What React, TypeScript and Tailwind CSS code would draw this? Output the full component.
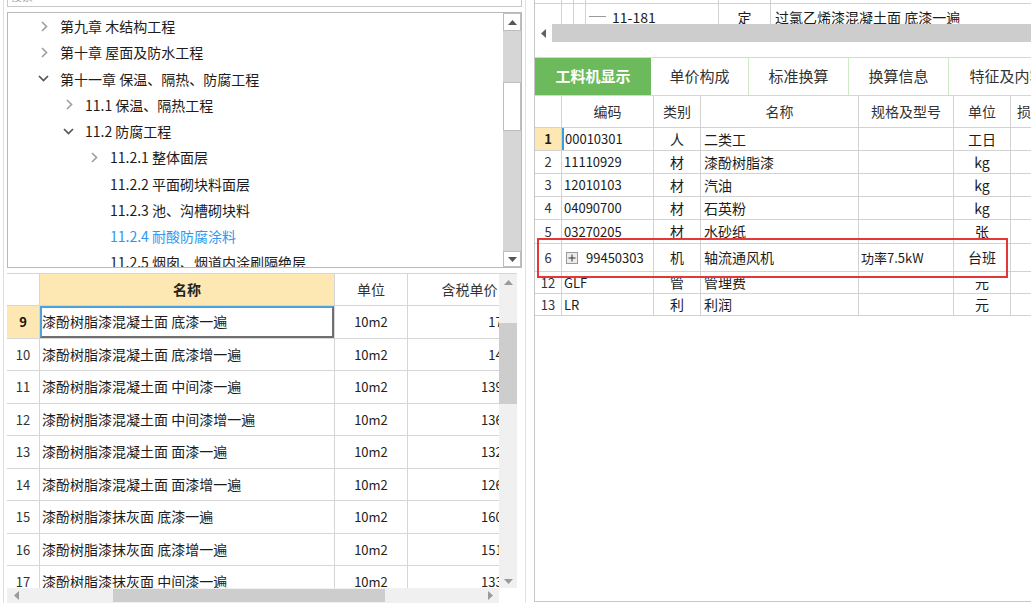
import React from 'react';

const F = "font-['Noto_Sans_CJK_SC','Noto_Sans',sans-serif]";

function Tri({ dir, color = '#5f5f5f' }: { dir: 'up' | 'down' | 'left' | 'right'; color?: string }) {
  const pts =
    dir === 'up' ? '0,5 4.5,0 9,5' : dir === 'down' ? '0,0 4.5,5 9,0' : dir === 'left' ? '5,0 0,4.5 5,9' : '0,0 5,4.5 0,9';
  const w = dir === 'up' || dir === 'down' ? 9 : 5;
  const h = dir === 'up' || dir === 'down' ? 5 : 9;
  return (
    <svg width={w} height={h} viewBox={`0 0 ${w} ${h}`}>
      <polygon points={pts} fill={color} />
    </svg>
  );
}

function Chevron({ open }: { open: boolean }) {
  if (open)
    return (
      <svg width="11" height="7" viewBox="0 0 11 7" className="ml-0">
        <polyline points="1,1 5.5,5.5 10,1" fill="none" stroke="#555" strokeWidth="1.7" />
      </svg>
    );
  return (
    <svg width="7" height="11" viewBox="0 0 7 11" className="ml-[3px]">
      <polyline points="1,1 5.5,5.5 1,10" fill="none" stroke="#a0a0a0" strokeWidth="1.7" />
    </svg>
  );
}

type TreeItem = { level: number; state: 'open' | 'closed' | 'leaf'; text: string; blue?: boolean };

const treeItems: TreeItem[] = [
  { level: 0, state: 'closed', text: '第九章 木结构工程' },
  { level: 0, state: 'closed', text: '第十章 屋面及防水工程' },
  { level: 0, state: 'open', text: '第十一章 保温、隔热、防腐工程' },
  { level: 1, state: 'closed', text: '11.1 保温、隔热工程' },
  { level: 1, state: 'open', text: '11.2 防腐工程' },
  { level: 2, state: 'closed', text: '11.2.1 整体面层' },
  { level: 2, state: 'leaf', text: '11.2.2 平面砌块料面层' },
  { level: 2, state: 'leaf', text: '11.2.3 池、沟槽砌块料' },
  { level: 2, state: 'leaf', text: '11.2.4 耐酸防腐涂料', blue: true },
  { level: 2, state: 'leaf', text: '11.2.5 烟囱、烟道内涂刷隔绝层' },
];

function TreeRow({ item }: { item: TreeItem }) {
  const pl = item.level === 0 ? 'pl-[30px]' : item.level === 1 ? 'pl-[55px]' : 'pl-[80px]';
  return (
    <div className={`h-[26.25px] shrink-0 flex items-center ${pl}`}>
      <div className="w-[22px] h-full flex items-center">
        {item.state !== 'leaf' && <Chevron open={item.state === 'open'} />}
      </div>
      <span className={`text-[14px] leading-none whitespace-nowrap ${item.blue ? 'text-[#2f97f0]' : 'text-[#1c1c1c]'}`}>
        {item.text}
      </span>
    </div>
  );
}

const leftRows = [
  { n: 9, name: '漆酚树脂漆混凝土面 底漆一遍', price: '177.45' },
  { n: 10, name: '漆酚树脂漆混凝土面 底漆增一遍', price: '145.83' },
  { n: 11, name: '漆酚树脂漆混凝土面 中间漆一遍', price: '1397.60' },
  { n: 12, name: '漆酚树脂漆混凝土面 中间漆增一遍', price: '1365.32' },
  { n: 13, name: '漆酚树脂漆混凝土面 面漆一遍', price: '1329.04' },
  { n: 14, name: '漆酚树脂漆混凝土面 面漆增一遍', price: '1262.77' },
  { n: 15, name: '漆酚树脂漆抹灰面 底漆一遍', price: '1608.08' },
  { n: 16, name: '漆酚树脂漆抹灰面 底漆增一遍', price: '1514.80' },
  { n: 17, name: '漆酚树脂漆抹灰面 中间漆一遍', price: '1336.91' },
];

const rightRows = [
  { n: '1', code: '00010301', type: '人', name: '二类工', spec: '', unit: '工日', h: 'h-[23px]' },
  { n: '2', code: '11110929', type: '材', name: '漆酚树脂漆', spec: '', unit: 'kg', h: 'h-[23px]' },
  { n: '3', code: '12010103', type: '材', name: '汽油', spec: '', unit: 'kg', h: 'h-[23px]' },
  { n: '4', code: '04090700', type: '材', name: '石英粉', spec: '', unit: 'kg', h: 'h-[23px]' },
  { n: '5', code: '03270205', type: '材', name: '水砂纸', spec: '', unit: '张', h: 'h-[24px]' },
  { n: '6', code: '99450303', type: '机', name: '轴流通风机', spec: '功率7.5kW', unit: '台班', h: 'h-[28px]', plus: true },
  { n: '12', code: 'GLF', type: '管', name: '管理费', spec: '', unit: '元', h: 'h-[22px]' },
  { n: '13', code: 'LR', type: '利', name: '利润', spec: '', unit: '元', h: 'h-[22px]' },
];

function LeftPanel() {
  return (
    <div className="w-[526px] h-full shrink-0 pl-[3px] border-r border-[#e2e2e2]">
      <div className="h-full border-l border-[#dedede] pl-[3px] flex flex-col">
        {/* search box remnant */}
        <div className="w-[515px] h-[7px] border-x border-b border-[#c9c9c9] overflow-hidden relative">
          <span className="absolute left-[3px] top-[-9px] text-[11px] text-[#a8a8a8] leading-none">搜索</span>
        </div>
        {/* tree box */}
        <div className="mt-[5px] w-[515px] h-[256px] border border-[#b9b9b9] flex overflow-hidden">
          <div className="flex-1 flex flex-col overflow-hidden">
            {treeItems.map((it, i) => (
              <TreeRow key={i} item={it} />
            ))}
          </div>
          <div className="w-[18px] h-full flex flex-col bg-[#d6d6d6]">
            <div className="h-[18px] shrink-0 bg-white border border-[#bdbdbd] flex items-center justify-center">
              <Tri dir="up" color="#555" />
            </div>
            <div className="h-[51px] shrink-0" />
            <div className="h-[49px] shrink-0 bg-white border border-[#bdbdbd]" />
            <div className="flex-1" />
            <div className="h-[16px] shrink-0 bg-white border border-[#bdbdbd] flex items-center justify-center">
              <Tri dir="down" color="#555" />
            </div>
          </div>
        </div>
        {/* bottom table */}
        <div className="mt-[5px] w-[510px] h-[315px] flex border-t border-[#d6d6d6]">
          <div className="w-[492px] h-full overflow-hidden flex flex-col">
            <div className="h-[32px] shrink-0 flex border-b border-[#d6d6d6]">
              <div className="w-[33px] shrink-0 border-r border-[#d6d6d6]" />
              <div className="w-[295px] shrink-0 border-r border-[#d6d6d6] bg-[#fde8b3] flex items-center justify-center text-[14px] font-bold text-[#222]">
                名称
              </div>
              <div className="w-[73px] shrink-0 border-r border-[#d6d6d6] flex items-center justify-center text-[14px] text-[#333]">
                单位
              </div>
              <div className="w-[123px] shrink-0 flex items-center justify-center text-[14px] text-[#333] whitespace-nowrap">
                含税单价
              </div>
            </div>
            {leftRows.map((r) => {
              const sel = r.n === 9;
              return (
                <div key={r.n} className="h-[32.5px] shrink-0 flex border-b border-[#d6d6d6]">
                  <div
                    className={`w-[33px] shrink-0 border-r border-[#d6d6d6] flex items-center justify-center text-[13px] ${
                      sel ? 'bg-[#fde8b3] font-bold text-[#111]' : 'text-[#333]'
                    }`}
                  >
                    {r.n}
                  </div>
                  <div className="w-[295px] shrink-0 border-r border-[#d6d6d6] relative flex items-center pl-[2px] text-[14px] text-[#1c1c1c] whitespace-nowrap">
                    {sel && (
                      <div className="absolute inset-0 border-2 border-t-[#4aa3df] border-l-[#4aa3df] border-r-[#6f6f6f] border-b-[#6f6f6f]" />
                    )}
                    {r.name}
                  </div>
                  <div className="w-[73px] shrink-0 border-r border-[#d6d6d6] flex items-center justify-center text-[13px] text-[#222]">
                    10m2
                  </div>
                  <div className="w-[123px] shrink-0 flex items-center justify-end pr-[3px] text-[13px] text-[#222]">
                    {r.price}
                  </div>
                </div>
              );
            })}
          </div>
          <div className="w-[18px] h-full flex flex-col bg-[#f0f0f0]">
            <div className="h-[17px] shrink-0 flex items-center justify-center">
              <Tri dir="up" color="#9a9a9a" />
            </div>
            <div className="h-[32px] shrink-0" />
            <div className="h-[81px] shrink-0 bg-[#cdcdcd]" />
            <div className="flex-1" />
            <div className="h-[14px] shrink-0 flex items-center justify-center">
              <Tri dir="down" color="#9a9a9a" />
            </div>
          </div>
        </div>
        {/* horizontal scrollbar */}
        <div className="w-[510px] h-[15px] flex">
          <div className="w-[492px] h-full bg-[#f0f0f0] flex items-center">
            <div className="w-[18px] h-full flex items-center justify-center">
              <Tri dir="left" color="#9a9a9a" />
            </div>
            <div className="w-[88px] h-full" />
            <div className="w-[272px] h-[13px] bg-[#cdcdcd]" />
            <div className="flex-1" />
            <div className="w-[18px] h-full flex items-center justify-center">
              <Tri dir="right" color="#9a9a9a" />
            </div>
          </div>
          <div className="w-[18px] h-full bg-white" />
        </div>
      </div>
    </div>
  );
}

function RightPanel() {
  const line = 'border-r border-[#d2d2d2]';
  return (
    <div className="ml-[8px] flex-1 h-[602px] border-l border-b border-[#c6c6c6] flex flex-col overflow-hidden">
      {/* top tree-grid fragment */}
      <div className="h-[24px] shrink-0 overflow-hidden relative">
        <div className="h-[4px] flex border-b border-[#d2d2d2]">
          <div className={`w-[27px] shrink-0 ${line}`} />
          <div className={`w-[12px] shrink-0 ${line}`} />
          <div className={`w-[12px] shrink-0 ${line}`} />
          <div className={`w-[133px] shrink-0 ${line}`} />
          <div className={`w-[52px] shrink-0 ${line}`} />
          <div className="flex-1" />
        </div>
        <div className="h-[26px] flex">
          <div className={`w-[27px] shrink-0 ${line}`} />
          <div className={`w-[12px] shrink-0 ${line}`} />
          <div className={`w-[12px] shrink-0 ${line}`} />
          <div className={`w-[133px] shrink-0 ${line} flex items-center`}>
            <div className="ml-[3px] w-[17px] h-px bg-[#9a9a9a] mt-[-2px]" />
            <span className="ml-[6px] text-[14px] text-[#1c1c1c] leading-none">11-181</span>
          </div>
          <div className={`w-[52px] shrink-0 ${line} flex items-center justify-center text-[14px] text-[#1c1c1c]`}>定</div>
          <div className="flex-1 flex items-center pl-[4px] text-[14px] text-[#1c1c1c] whitespace-nowrap">
            过氯乙烯漆混凝土面 底漆一遍
          </div>
        </div>
      </div>
      {/* horizontal scrollbar */}
      <div className="h-[18px] shrink-0 flex bg-[#cdcdcd]">
        <div className="w-[17px] h-full bg-white flex items-center justify-center">
          <Tri dir="left" color="#606060" />
        </div>
      </div>
      <div className="h-[15px] shrink-0" />
      {/* tabs */}
      <div className="h-[39px] shrink-0 flex border-t border-b border-[#c6e3bd] text-[15px] whitespace-nowrap">
        <div className="w-[116px] shrink-0 bg-[#6cba5c] text-white font-bold flex items-center justify-center">工料机显示</div>
        <div className="w-[98px] shrink-0 border-r border-[#cfe8c6] flex items-center justify-center text-[#333]">单价构成</div>
        <div className="w-[100px] shrink-0 border-r border-[#cfe8c6] flex items-center justify-center text-[#333]">标准换算</div>
        <div className="w-[100px] shrink-0 border-r border-[#cfe8c6] flex items-center justify-center text-[#333]">换算信息</div>
        <div className="w-[116px] shrink-0 flex items-center justify-center text-[#333]">特征及内容</div>
      </div>
      {/* grid */}
      <div className="relative shrink-0 whitespace-nowrap">
        <div className="h-[32px] flex border-b border-[#d2d2d2] text-[14px] text-[#333]">
          <div className={`w-[27px] shrink-0 ${line}`} />
          <div className={`w-[92px] shrink-0 ${line} flex items-center justify-center`}>编码</div>
          <div className={`w-[47px] shrink-0 ${line} flex items-center justify-center`}>类别</div>
          <div className={`w-[158px] shrink-0 ${line} flex items-center justify-center`}>名称</div>
          <div className={`w-[95px] shrink-0 ${line} flex items-center justify-center`}>规格及型号</div>
          <div className={`w-[57px] shrink-0 ${line} flex items-center justify-center`}>单位</div>
          <div className={`w-[48px] shrink-0 ${line} flex items-center pl-[6px]`}>损耗率</div>
        </div>
        {rightRows.map((r) => {
          const first = r.n === '1';
          return (
            <div key={r.n} className={`${r.h} flex border-b border-[#d2d2d2] text-[14px] text-[#1c1c1c]`}>
              <div
                className={`w-[27px] shrink-0 ${line} flex items-center justify-center text-[13px] ${
                  first ? 'bg-[#fde8b3] font-bold' : 'text-[#333]'
                }`}
              >
                {r.n}
              </div>
              <div
                className={`w-[92px] shrink-0 ${line} flex items-center text-[13px] ${
                  first ? 'border-l-2 border-l-[#3a9de0] pl-[1px]' : 'pl-[2px]'
                }`}
              >
                {r.plus && (
                  <div className="ml-[2px] mr-[8px] w-[12px] h-[12px] border border-[#9a9a9a] bg-[#ececec] flex items-center justify-center">
                    <svg width="8" height="8" viewBox="0 0 8 8">
                      <rect x="3.5" y="0.5" width="1" height="7" fill="#333" />
                      <rect x="0.5" y="3.5" width="7" height="1" fill="#333" />
                    </svg>
                  </div>
                )}
                {r.code}
              </div>
              <div className={`w-[47px] shrink-0 ${line} flex items-center justify-center`}>{r.type}</div>
              <div className={`w-[158px] shrink-0 ${line} flex items-center pl-[3px]`}>{r.name}</div>
              <div className={`w-[95px] shrink-0 ${line} flex items-center pl-[2px] text-[13px]`}>{r.spec}</div>
              <div className={`w-[57px] shrink-0 ${line} flex items-center justify-center`}>{r.unit}</div>
              <div className={`w-[48px] shrink-0 ${line}`} />
            </div>
          );
        })}
        <div className="absolute left-[2px] top-[142px] w-[471px] h-[40px] border-2 border-[#e3383a] pointer-events-none" />
      </div>
      <div className="flex-1" />
    </div>
  );
}

export default function App() {
  return (
    <div className={`w-[1031px] h-[603px] bg-white flex overflow-hidden ${F}`}>
      <LeftPanel />
      <RightPanel />
    </div>
  );
}
